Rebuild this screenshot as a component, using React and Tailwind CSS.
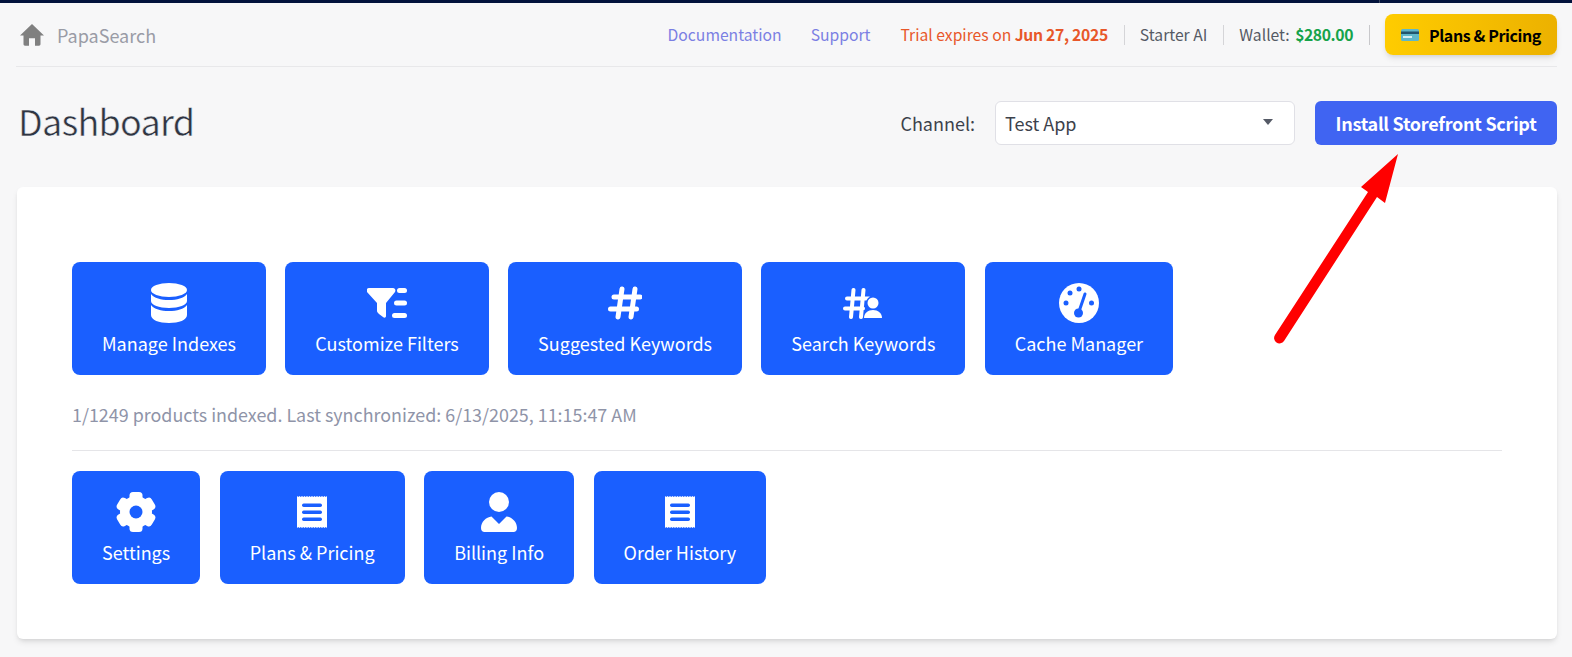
const Database = () => (
	<svg width="36" height="40" viewBox="0 0 36 40" fill="white">
		<ellipse cx="18" cy="7" rx="18" ry="7" />
		<path d="M0 11c3 4 10 6 18 6s15-2 18-6v7c0 4-8 7-18 7S0 22 0 18z" />
		<path d="M0 22c3 4 10 6 18 6s15-2 18-6v10c0 5-8 8-18 8S0 37 0 32z" />
	</svg>
);

const FilterList = () => (
	<svg width="40" height="30" viewBox="0 0 40 30" fill="white">
		<path d="M2 0h24c2 0 3 2 2 4L19 15v13c0 2-2 2-3 1l-4-3c-1-1-2-2-2-3v-8L0 4C-1 2 0 0 2 0z" />
		<rect x="30" y="0" width="10" height="5" rx="2.5" />
		<rect x="27" y="12.5" width="13" height="5" rx="2.5" />
		<rect x="25" y="25" width="15" height="5" rx="2.5" />
	</svg>
);

const Hash = () => (
	<svg width="34" height="34" viewBox="0 0 34 34" fill="none" stroke="white" strokeWidth="5" strokeLinecap="round">
		<path d="M14 3 10 31M27 3l-4 28M6 11h26M2.500 23h26" />
	</svg>
);

const HashPerson = () => (
	<svg width="40" height="31" viewBox="0 0 40 31" fill="none">
		<path d="M10.500 2 8 29M20.500 2 18 29M4 10.500h22M2 20.500h18" stroke="white" strokeWidth="4" strokeLinecap="round" />
		<circle cx="30" cy="15" r="5.500" fill="#1a5fff" stroke="#1a5fff" strokeWidth="3" />
		<circle cx="30" cy="15" r="5.500" fill="white" />
		<path d="M21 30c0-5 4-8 9-8s9 3 9 8z" fill="white" />
	</svg>
);

const Gauge = () => (
	<svg width="40" height="40" viewBox="0 0 40 40">
		<circle cx="20" cy="20" r="20" fill="white" />
		<g fill="#1a5fff">
			<circle cx="11" cy="10" r="2.500" />
			<circle cx="20" cy="6" r="2.500" />
			<circle cx="7" cy="20" r="2.500" />
			<circle cx="32.500" cy="20" r="2.500" />
			<circle cx="19.500" cy="30" r="4.500" />
		</g>
		<path d="M19.500 30 26 11" stroke="#1a5fff" strokeWidth="3" strokeLinecap="round" />
	</svg>
);

const Gear = () => (
	<svg width="40" height="40" viewBox="0 0 40 40" fill="white">
		<circle cx="20" cy="20" r="16" />
		{[0, 60, 120, 180, 240, 300].map((a) => (
			<rect key={a} x="13.500" y="0" width="13" height="12" rx="3.500" transform={`rotate(${a} 20 20)`} />
		))}
		<circle cx="20" cy="20" r="6.500" fill="#1a5fff" />
	</svg>
);

const Receipt = () => (
	<svg width="30" height="32" viewBox="0 0 30 32" fill="white">
		<path d="M0 0l1.250 1 1.250-1 1.250 1L5 0l1.250 1L7.500 0l1.250 1L10 0l1.250 1 1.250-1 1.250 1L15 0l1.250 1 1.250-1 1.250 1L20 0l1.250 1 1.250-1 1.250 1L25 0l1.250 1 1.250-1 1.250 1L30 0v32l-1.250-1-1.250 1-1.250-1L25 32l-1.250-1-1.250 1-1.250-1L20 32l-1.250-1-1.250 1-1.250-1L15 32l-1.250-1-1.250 1-1.250-1L10 32l-1.250-1-1.250 1-1.250-1L5 32l-1.250-1-1.250 1-1.250-1L0 32z" />
		<g fill="#1a5fff">
			<rect x="5" y="7.500" width="20" height="3.500" rx="1.700" />
			<rect x="5" y="14.500" width="20" height="3.500" rx="1.700" />
			<rect x="5" y="21.500" width="20" height="3.500" rx="1.700" />
		</g>
	</svg>
);

const Person = () => (
	<svg width="36" height="40" viewBox="0 0 36 40" fill="white">
		<circle cx="18" cy="10" r="10" />
		<path d="M10.500 24.500 18 32l7.500-7.500C31 25 36 30 36 36c0 2.500-1.500 4-3.500 4h-29C1.500 40 0 38.500 0 36c0-6 5-11 10.500-11.500z" />
	</svg>
);

const topRow = [
	{ label: "Manage Indexes", icon: <Database /> },
	{ label: "Customize Filters", icon: <FilterList /> },
	{ label: "Suggested Keywords", icon: <Hash /> },
	{ label: "Search Keywords", icon: <HashPerson /> },
	{ label: "Cache Manager", icon: <Gauge /> },
];

const bottomRow = [
	{ label: "Settings", icon: <Gear /> },
	{ label: "Plans & Pricing", icon: <Receipt /> },
	{ label: "Billing Info", icon: <Person /> },
	{ label: "Order History", icon: <Receipt /> },
];

const Tile = ({ label, icon }) => (
	<button className="flex h-[113px] flex-col items-center rounded-lg bg-[#1a5fff] px-[30px] pt-[21px] text-white">
		<span className="flex h-10 items-center justify-center">{icon}</span>
		<span className="mt-[7px] text-lg leading-[27px] whitespace-nowrap">{label}</span>
	</button>
);

const App = () => {
	return (
		<div className="relative h-[657px] overflow-hidden bg-[#f7f7f8] font-['Noto_Sans_CJK_SC',sans-serif]">
			<div className="h-[3px] bg-[#02133c]" />
			<div className="absolute top-0 left-[1379px] h-[3px] w-px bg-[#3a4660]" />
			<div className="pr-[15px] pl-[16px]">
				<header className="flex h-[64px] items-center justify-between border-b border-[#e8e8ea]">
					<div className="flex items-center gap-[13px] pl-[4px]">
						<svg width="24" height="22" viewBox="0 0 24 22" fill="#808080">
							<path d="M12 0 24 11.500h-3.500V20c0 1-.6 1.700-1.500 1.700h-4v-7.500H9v7.500H5c-.9 0-1.500-.7-1.500-1.700v-8.500H0z" />
						</svg>
						<span className="text-lg text-[#9a9ca6]">PapaSearch</span>
					</div>
					<nav className="flex items-center text-[15.7px]">
						<a className="text-[#7b7fe3]">Documentation</a>
						<a className="ml-[29px] text-[#7b7fe3]">Support</a>
						<span className="ml-[30px] text-[#e8572a]">
							Trial expires on <b className="font-semibold tracking-[-0.3px]">Jun 27, 2025</b>
						</span>
						<span className="ml-[16px] h-[20px] w-px bg-[#d5d5d8]" />
						<span className="ml-[15px] text-[#555a64]">Starter AI</span>
						<span className="ml-[16px] h-[20px] w-px bg-[#d5d5d8]" />
						<span className="ml-[15px] text-[#555a64]">
							Wallet: <b className="ml-[2px] font-semibold tracking-[-0.4px] text-[#16a34a]">$280.00</b>
						</span>
						<span className="ml-[16px] h-[20px] w-px bg-[#c8c8cb]" />
						<button className="ml-[15px] flex h-[41px] w-[172px] items-center justify-center gap-[10px] rounded-lg bg-gradient-to-r from-[#ffcc00] to-[#ecb100] text-base font-semibold tracking-[-0.4px] text-black shadow-md">
							<svg width="18" height="12" viewBox="0 0 18 12">
								<rect width="18" height="12" rx="1.500" fill="#5fb7c9" />
								<rect y="2.500" width="18" height="2.500" fill="#23566e" />
								<rect x="2" y="7" width="9" height="2" fill="#d8eef2" />
							</svg>
							Plans &amp; Pricing
						</button>
					</nav>
				</header>

				<div className="flex h-[120px] items-center justify-between pb-[9px] pl-[2px]">
					<h1 className="mb-[5px] text-[36px] tracking-[-0.8px] text-[#2f3542] [-webkit-text-stroke:0.5px_#f7f7f8]">Dashboard</h1>
					<div className="flex items-center text-lg">
						<span className="text-[#3c414b]">Channel:</span>
						<div className="ml-[20px] flex h-[44px] w-[300px] items-center justify-between rounded-md border border-[#e0e0e6] bg-white pr-[21px] pl-[9px] text-[#3c414b]">
							Test App
							<svg width="10" height="6" viewBox="0 0 10 6" fill="#555a66" className="mb-[2px]">
								<path d="M0 0h10L5 6z" />
							</svg>
						</div>
						<button className="ml-[20px] h-[44px] w-[242px] rounded-md bg-[#4064f2] font-semibold tracking-[-0.28px] text-white">
							Install Storefront Script
						</button>
					</div>
				</div>

				<main className="ml-px h-[452px] rounded-md bg-white px-[55px] pt-[75px] shadow-md">
					<div className="flex gap-[19.300px]">
						{topRow.map((t) => (
							<Tile key={t.label} {...t} />
						))}
					</div>
					<p className="mt-[26px] text-[17.9px] leading-[26px] text-[#8f94a8]">
						1/1249 products indexed. Last synchronized: 6/13/2025, 11:15:47 AM
					</p>
					<div className="mt-[23px] border-t border-[#e5e5e8]" />
					<div className="mt-[20px] flex gap-[19.500px]">
						{bottomRow.map((t) => (
							<Tile key={t.label} {...t} />
						))}
					</div>
				</main>
			</div>

			{/* red annotation arrow over the page */}
			<svg className="pointer-events-none absolute top-0 left-0" width="1572" height="657">
				<path d="M1398 154 1361 187 1368 192 1275 335a5 5 0 0 0 9 6L1377 197 1385 203z" fill="#f00" />
			</svg>
		</div>
	);
};

export default App;
